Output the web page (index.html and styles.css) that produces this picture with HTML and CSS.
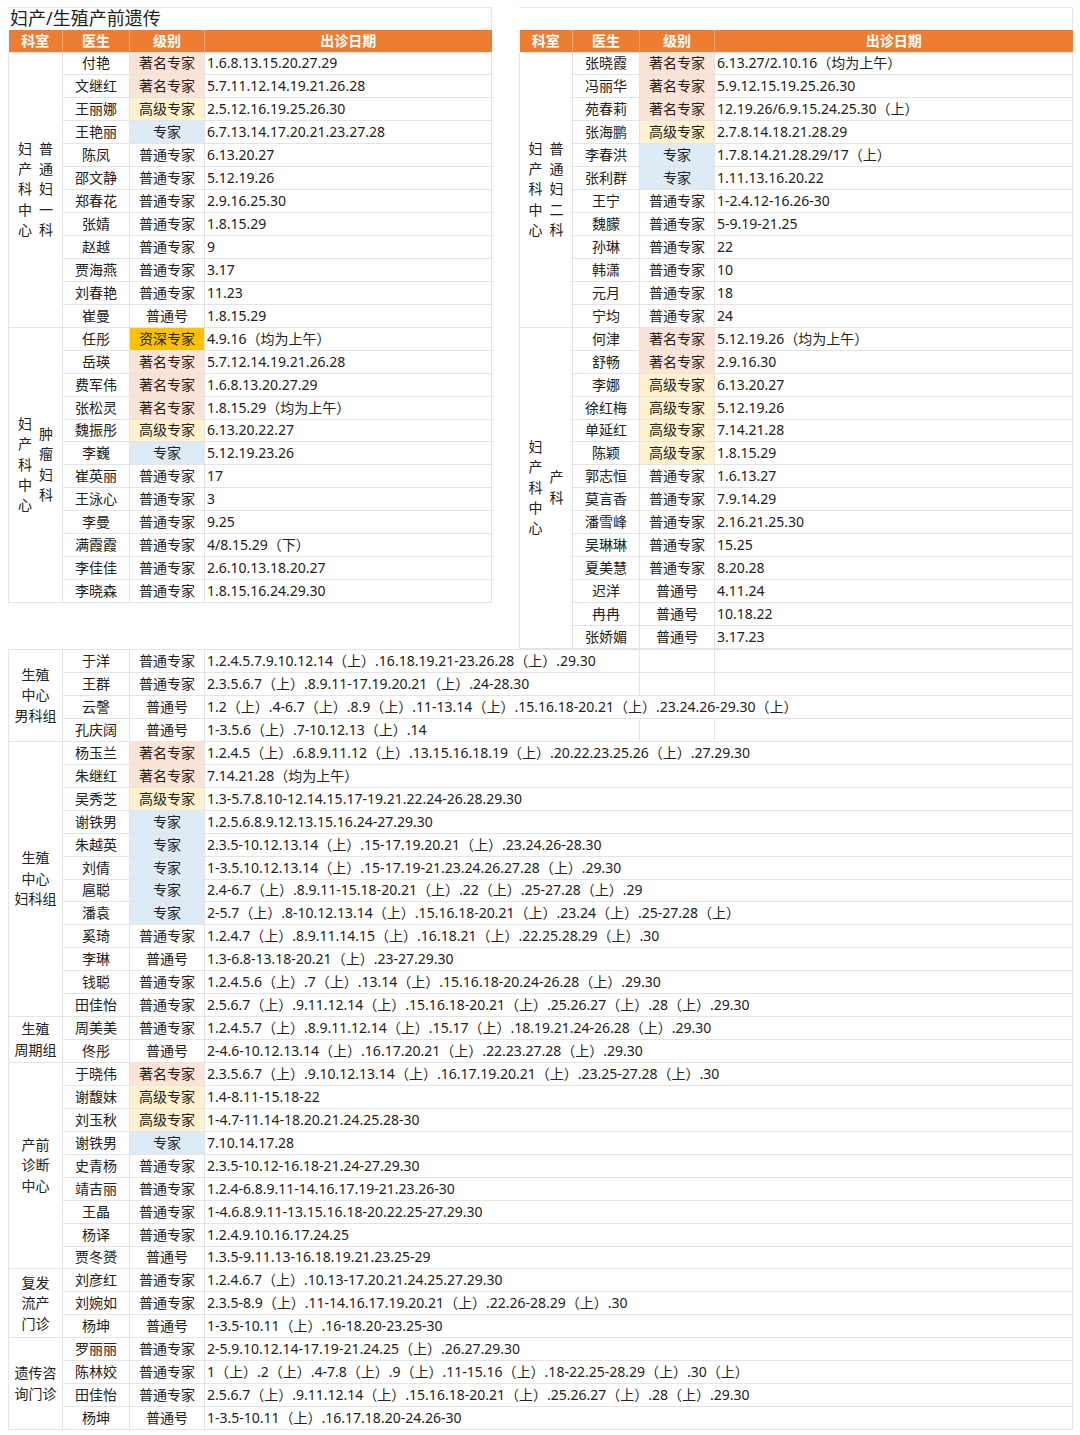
FILE: index.html
```html
<!DOCTYPE html>
<html lang="zh-CN">
<head>
<meta charset="utf-8">
<title>妇产/生殖产前遗传</title>
<link rel="stylesheet" href="styles.css">
</head>
<body>
<div class="page">
  <div class="top">
    <div class="blk blk-l">
      <div class="title">妇产/生殖产前遗传</div>
      <table>
        <colgroup><col class="c1"><col class="c2"><col class="c3"><col></colgroup>
        <thead><tr><th>科室</th><th>医生</th><th>级别</th><th>出诊日期</th></tr></thead>
        <tbody>
          <tr><td rowspan="12" class="dept"><div class="vt"><span>妇<br>产<br>科<br>中<br>心</span><span>普<br>通<br>妇<br>一<br>科</span></div></td><td>付艳</td><td class="zm">著名专家</td><td class="d">1.6.8.13.15.20.27.29</td></tr>
          <tr><td>文继红</td><td class="zm">著名专家</td><td class="d">5.7.11.12.14.19.21.26.28</td></tr>
          <tr><td>王丽娜</td><td class="gj">高级专家</td><td class="d">2.5.12.16.19.25.26.30</td></tr>
          <tr><td>王艳丽</td><td class="zj">专家</td><td class="d">6.7.13.14.17.20.21.23.27.28</td></tr>
          <tr><td>陈凤</td><td>普通专家</td><td class="d">6.13.20.27</td></tr>
          <tr><td>邵文静</td><td>普通专家</td><td class="d">5.12.19.26</td></tr>
          <tr><td>郑春花</td><td>普通专家</td><td class="d">2.9.16.25.30</td></tr>
          <tr><td>张婧</td><td>普通专家</td><td class="d">1.8.15.29</td></tr>
          <tr><td>赵越</td><td>普通专家</td><td class="d">9</td></tr>
          <tr><td>贾海燕</td><td>普通专家</td><td class="d">3.17</td></tr>
          <tr><td>刘春艳</td><td>普通专家</td><td class="d">11.23</td></tr>
          <tr><td>崔曼</td><td>普通号</td><td class="d">1.8.15.29</td></tr>
          <tr><td rowspan="12" class="dept"><div class="vt"><span>妇<br>产<br>科<br>中<br>心</span><span>肿<br>瘤<br>妇<br>科</span></div></td><td>任彤</td><td class="zs">资深专家</td><td class="d">4.9.16（均为上午）</td></tr>
          <tr><td>岳瑛</td><td class="zm">著名专家</td><td class="d">5.7.12.14.19.21.26.28</td></tr>
          <tr><td>费军伟</td><td class="zm">著名专家</td><td class="d">1.6.8.13.20.27.29</td></tr>
          <tr><td>张松灵</td><td class="zm">著名专家</td><td class="d">1.8.15.29（均为上午）</td></tr>
          <tr><td>魏振彤</td><td class="gj">高级专家</td><td class="d">6.13.20.22.27</td></tr>
          <tr><td>李巍</td><td class="zj">专家</td><td class="d">5.12.19.23.26</td></tr>
          <tr><td>崔英丽</td><td>普通专家</td><td class="d">17</td></tr>
          <tr><td>王泳心</td><td>普通专家</td><td class="d">3</td></tr>
          <tr><td>李曼</td><td>普通专家</td><td class="d">9.25</td></tr>
          <tr><td>满霞霞</td><td>普通专家</td><td class="d">4/8.15.29（下）</td></tr>
          <tr><td>李佳佳</td><td>普通专家</td><td class="d">2.6.10.13.18.20.27</td></tr>
          <tr><td>李晓森</td><td>普通专家</td><td class="d">1.8.15.16.24.29.30</td></tr>
        </tbody>
      </table>
    </div>
    <div class="blk blk-r">
      <div class="title"></div>
      <table>
        <colgroup><col class="r1"><col class="c2"><col class="c3"><col></colgroup>
        <thead><tr><th>科室</th><th>医生</th><th>级别</th><th>出诊日期</th></tr></thead>
        <tbody>
          <tr><td rowspan="12" class="dept"><div class="vt"><span>妇<br>产<br>科<br>中<br>心</span><span>普<br>通<br>妇<br>二<br>科</span></div></td><td>张晓霞</td><td class="zm">著名专家</td><td class="d">6.13.27/2.10.16（均为上午）</td></tr>
          <tr><td>冯丽华</td><td class="zm">著名专家</td><td class="d">5.9.12.15.19.25.26.30</td></tr>
          <tr><td>苑春莉</td><td class="zm">著名专家</td><td class="d">12.19.26/6.9.15.24.25.30（上）</td></tr>
          <tr><td>张海鹏</td><td class="gj">高级专家</td><td class="d">2.7.8.14.18.21.28.29</td></tr>
          <tr><td>李春洪</td><td class="zj">专家</td><td class="d">1.7.8.14.21.28.29/17（上）</td></tr>
          <tr><td>张利群</td><td class="zj">专家</td><td class="d">1.11.13.16.20.22</td></tr>
          <tr><td>王宁</td><td>普通专家</td><td class="d">1-2.4.12-16.26-30</td></tr>
          <tr><td>魏朦</td><td>普通专家</td><td class="d">5-9.19-21.25</td></tr>
          <tr><td>孙琳</td><td>普通专家</td><td class="d">22</td></tr>
          <tr><td>韩潇</td><td>普通专家</td><td class="d">10</td></tr>
          <tr><td>元月</td><td>普通专家</td><td class="d">18</td></tr>
          <tr><td>宁均</td><td>普通专家</td><td class="d">24</td></tr>
          <tr><td rowspan="14" class="dept"><div class="vt"><span>妇<br>产<br>科<br>中<br>心</span><span>产<br>科</span></div></td><td>何津</td><td class="zm">著名专家</td><td class="d">5.12.19.26（均为上午）</td></tr>
          <tr><td>舒畅</td><td class="zm">著名专家</td><td class="d">2.9.16.30</td></tr>
          <tr><td>李娜</td><td class="gj">高级专家</td><td class="d">6.13.20.27</td></tr>
          <tr><td>徐红梅</td><td class="gj">高级专家</td><td class="d">5.12.19.26</td></tr>
          <tr><td>单延红</td><td class="gj">高级专家</td><td class="d">7.14.21.28</td></tr>
          <tr><td>陈颖</td><td class="gj">高级专家</td><td class="d">1.8.15.29</td></tr>
          <tr><td>郭志恒</td><td>普通专家</td><td class="d">1.6.13.27</td></tr>
          <tr><td>莫言香</td><td>普通专家</td><td class="d">7.9.14.29</td></tr>
          <tr><td>潘雪峰</td><td>普通专家</td><td class="d">2.16.21.25.30</td></tr>
          <tr><td>吴琳琳</td><td>普通专家</td><td class="d">15.25</td></tr>
          <tr><td>夏美慧</td><td>普通专家</td><td class="d">8.20.28</td></tr>
          <tr><td>迟洋</td><td>普通号</td><td class="d">4.11.24</td></tr>
          <tr><td>冉冉</td><td>普通号</td><td class="d">10.18.22</td></tr>
          <tr><td>张娇媚</td><td>普通号</td><td class="d">3.17.23</td></tr>
        </tbody>
      </table>
    </div>
  </div>

  <table class="bottom">
    <colgroup><col class="c1"><col class="c2"><col class="c3"><col></colgroup>
    <tbody>
      <tr><td rowspan="4" class="dept2">生殖<br>中心<br>男科组</td><td>于洋</td><td>普通专家</td><td class="d ov"><span>1.2.4.5.7.9.10.12.14（上）.16.18.19.21-23.26.28（上）.29.30</span></td></tr>
      <tr><td>王群</td><td>普通专家</td><td class="d ov"><span>2.3.5.6.7（上）.8.9.11-17.19.20.21（上）.24-28.30</span></td></tr>
      <tr><td>云謦</td><td>普通号</td><td class="d ov"><span>1.2（上）.4-6.7（上）.8.9（上）.11-13.14（上）.15.16.18-20.21（上）.23.24.26-29.30（上）</span></td></tr>
      <tr><td>孔庆阔</td><td>普通号</td><td class="d ov"><span>1-3.5.6（上）.7-10.12.13（上）.14</span></td></tr>

      <tr><td rowspan="12" class="dept2">生殖<br>中心<br>妇科组</td><td>杨玉兰</td><td class="zm">著名专家</td><td class="d">1.2.4.5（上）.6.8.9.11.12（上）.13.15.16.18.19（上）.20.22.23.25.26（上）.27.29.30</td></tr>
      <tr><td>朱继红</td><td class="zm">著名专家</td><td class="d">7.14.21.28（均为上午）</td></tr>
      <tr><td>吴秀芝</td><td class="gj">高级专家</td><td class="d">1.3-5.7.8.10-12.14.15.17-19.21.22.24-26.28.29.30</td></tr>
      <tr><td>谢铁男</td><td class="zj">专家</td><td class="d">1.2.5.6.8.9.12.13.15.16.24-27.29.30</td></tr>
      <tr><td>朱越英</td><td class="zj">专家</td><td class="d">2.3.5-10.12.13.14（上）.15-17.19.20.21（上）.23.24.26-28.30</td></tr>
      <tr><td>刘倩</td><td class="zj">专家</td><td class="d">1-3.5.10.12.13.14（上）.15-17.19-21.23.24.26.27.28（上）.29.30</td></tr>
      <tr><td>扈聪</td><td class="zj">专家</td><td class="d">2.4-6.7（上）.8.9.11-15.18-20.21（上）.22（上）.25-27.28（上）.29</td></tr>
      <tr><td>潘袁</td><td class="zj">专家</td><td class="d">2-5.7（上）.8-10.12.13.14（上）.15.16.18-20.21（上）.23.24（上）.25-27.28（上）</td></tr>
      <tr><td>奚琦</td><td>普通专家</td><td class="d">1.2.4.7（上）.8.9.11.14.15（上）.16.18.21（上）.22.25.28.29（上）.30</td></tr>
      <tr><td>李琳</td><td>普通号</td><td class="d">1.3-6.8-13.18-20.21（上）.23-27.29.30</td></tr>
      <tr><td>钱聪</td><td>普通专家</td><td class="d">1.2.4.5.6（上）.7（上）.13.14（上）.15.16.18-20.24-26.28（上）.29.30</td></tr>
      <tr><td>田佳怡</td><td>普通专家</td><td class="d">2.5.6.7（上）.9.11.12.14（上）.15.16.18-20.21（上）.25.26.27（上）.28（上）.29.30</td></tr>

      <tr><td rowspan="2" class="dept2">生殖<br>周期组</td><td>周美美</td><td>普通专家</td><td class="d">1.2.4.5.7（上）.8.9.11.12.14（上）.15.17（上）.18.19.21.24-26.28（上）.29.30</td></tr>
      <tr><td>佟彤</td><td>普通号</td><td class="d">2-4.6-10.12.13.14（上）.16.17.20.21（上）.22.23.27.28（上）.29.30</td></tr>

      <tr><td rowspan="9" class="dept2">产前<br>诊断<br>中心</td><td>于晓伟</td><td class="zm">著名专家</td><td class="d">2.3.5.6.7（上）.9.10.12.13.14（上）.16.17.19.20.21（上）.23.25-27.28（上）.30</td></tr>
      <tr><td>谢馥妹</td><td class="gj">高级专家</td><td class="d">1.4-8.11-15.18-22</td></tr>
      <tr><td>刘玉秋</td><td class="gj">高级专家</td><td class="d">1-4.7-11.14-18.20.21.24.25.28-30</td></tr>
      <tr><td>谢铁男</td><td class="zj">专家</td><td class="d">7.10.14.17.28</td></tr>
      <tr><td>史青杨</td><td>普通专家</td><td class="d">2.3.5-10.12-16.18-21.24-27.29.30</td></tr>
      <tr><td>靖吉丽</td><td>普通专家</td><td class="d">1.2.4-6.8.9.11-14.16.17.19-21.23.26-30</td></tr>
      <tr><td>王晶</td><td>普通专家</td><td class="d">1-4.6.8.9.11-13.15.16.18-20.22.25-27.29.30</td></tr>
      <tr><td>杨译</td><td>普通专家</td><td class="d">1.2.4.9.10.16.17.24.25</td></tr>
      <tr><td>贾冬赟</td><td>普通号</td><td class="d">1.3.5-9.11.13-16.18.19.21.23.25-29</td></tr>

      <tr><td rowspan="3" class="dept2">复发<br>流产<br>门诊</td><td>刘彦红</td><td>普通专家</td><td class="d">1.2.4.6.7（上）.10.13-17.20.21.24.25.27.29.30</td></tr>
      <tr><td>刘婉如</td><td>普通专家</td><td class="d">2.3.5-8.9（上）.11-14.16.17.19.20.21（上）.22.26-28.29（上）.30</td></tr>
      <tr><td>杨坤</td><td>普通号</td><td class="d">1-3.5-10.11（上）.16-18.20-23.25-30</td></tr>

      <tr><td rowspan="4" class="dept2">遗传咨<br>询门诊</td><td>罗丽丽</td><td>普通专家</td><td class="d">2-5.9.10.12.14-17.19-21.24.25（上）.26.27.29.30</td></tr>
      <tr><td>陈林姣</td><td>普通专家</td><td class="d">1（上）.2（上）.4-7.8（上）.9（上）.11-15.16（上）.18-22.25-28.29（上）.30（上）</td></tr>
      <tr><td>田佳怡</td><td>普通专家</td><td class="d">2.5.6.7（上）.9.11.12.14（上）.15.16.18-20.21（上）.25.26.27（上）.28（上）.29.30</td></tr>
      <tr><td>杨坤</td><td>普通号</td><td class="d">1-3.5-10.11（上）.16.17.18.20-24.26-30</td></tr>
    </tbody>
  </table>
</div>
</body>
</html>
```

FILE: styles.css
```css
* { box-sizing: border-box; }

body {
  margin: 0;
  background: #fff;
  font-family: "Noto Sans", "Noto Sans CJK SC", sans-serif;
  font-size: 14px;
  color: #222;
}

.page {
  width: 1080px;
  padding: 7px 0 0 8px;
}

.top {
  display: flex;
  align-items: flex-start;
  gap: 27px;
}

.blk-l { width: 484px; }
.blk-r { width: 554px; }

.title {
  height: 23px;
  border-top: 1px solid #e8e8e8;
  border-right: 1px solid #e8e8e8;
  padding-left: 2px;
  font-size: 18px;
  line-height: 21px;
  color: #222;
  white-space: nowrap;
}

table {
  width: 100%;
  border-collapse: collapse;
  table-layout: fixed;
}

col.c1 { width: 54px; }
col.r1 { width: 53px; }
col.c2 { width: 67px; }
col.c3 { width: 75px; }

th {
  height: 22px;
  padding: 0;
  background: #ed7d31;
  color: #fff;
  font-weight: bold;
  font-size: 14px;
  line-height: 20px;
  border-right: 1px solid #f2a673;
}

th:last-child { border-right: none; }

tbody tr { height: 22.95px; }

td {
  padding: 0;
  border: 1px solid #e4e4e4;
  text-align: center;
  white-space: nowrap;
  line-height: 20px;
}

td.d {
  text-align: left;
  padding-left: 2px;
}

td.zm { background: #fbe3d6; }
td.gj { background: #fff2cc; }
td.zj { background: #ddebf7; }
td.zs { background: #ffc000; }

.dept { vertical-align: middle; }

.vt {
  display: flex;
  justify-content: center;
  align-items: center;
  gap: 7px;
  line-height: 20.4px;
}

.dept2 {
  line-height: 20.5px;
  vertical-align: middle;
}

.bottom { width: 1065px; }

td.ov {
  background-image:
    linear-gradient(#e4e4e4, #e4e4e4),
    linear-gradient(#e4e4e4, #e4e4e4);
  background-repeat: no-repeat;
  background-size: 1px 100%, 1px 100%;
  background-position: 434px 0, 509px 0;
}

td.ov span {
  display: inline-block;
  background: #fff;
  line-height: 22px;
}
```
